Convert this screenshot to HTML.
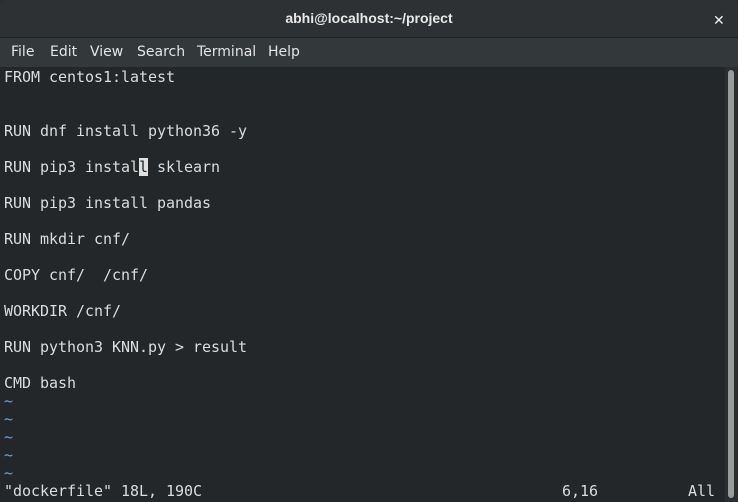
<!DOCTYPE html>
<html><head><style>
html,body{margin:0;padding:0;width:738px;height:502px;overflow:hidden;background:#2b2e31}
.title{position:absolute;left:0;top:0;width:738px;height:38px;background:#2d3134;border-radius:6px 6px 0 0;border-bottom:1px solid #1c1f20;box-sizing:border-box}
.title span{position:absolute;left:0;width:738px;top:10px;text-align:center;color:#e8e8e7;font:bold 14px "Liberation Sans","DejaVu Sans",sans-serif}
.x{position:absolute;left:713px;top:13px;color:#eee;font:bold 14px "DejaVu Sans",sans-serif}
.menu{position:absolute;left:0;top:38px;width:738px;height:29px;background:#33393b}
.menu span{position:absolute;top:6px;color:#e4e4e4;font:14px "DejaVu Sans","Liberation Sans",sans-serif}
.term{position:absolute;left:0;top:67px;width:725px;height:435px;background:#232729}
.sb{position:absolute;left:725px;top:67px;width:13px;height:435px;background:#2a2e30}
.thumb{position:absolute;left:728px;top:70px;width:6px;height:428px;background:#9a9c9b;border-radius:3px}
pre{position:absolute;left:4px;top:68px;margin:0;font:15px/18px "DejaVu Sans Mono","Liberation Mono",monospace;color:#dcdcdc;letter-spacing:-0.03px}
.t{color:#729fcf}
.cur{background:#e0e0e0;color:#232729}
</style></head><body>
<div class="title"><span>abhi@localhost:~/project</span><div class="x">✕</div></div>
<div class="menu"><span style="left:11px">File</span><span style="left:50px">Edit</span><span style="left:90px">View</span><span style="left:137px">Search</span><span style="left:197px">Terminal</span><span style="left:268px">Help</span></div>
<div class="term"></div><div class="sb"></div><div class="thumb"></div>
<pre>FROM centos1:latest


RUN dnf install python36 -y

RUN pip3 instal<span class="cur">l</span> sklearn

RUN pip3 install pandas

RUN mkdir cnf/

COPY cnf/  /cnf/

WORKDIR /cnf/

RUN python3 KNN.py &gt; result

CMD bash
<span class="t">~</span>
<span class="t">~</span>
<span class="t">~</span>
<span class="t">~</span>
<span class="t">~</span>
"dockerfile" 18L, 190C                                        6,16          All</pre>
</body></html>
